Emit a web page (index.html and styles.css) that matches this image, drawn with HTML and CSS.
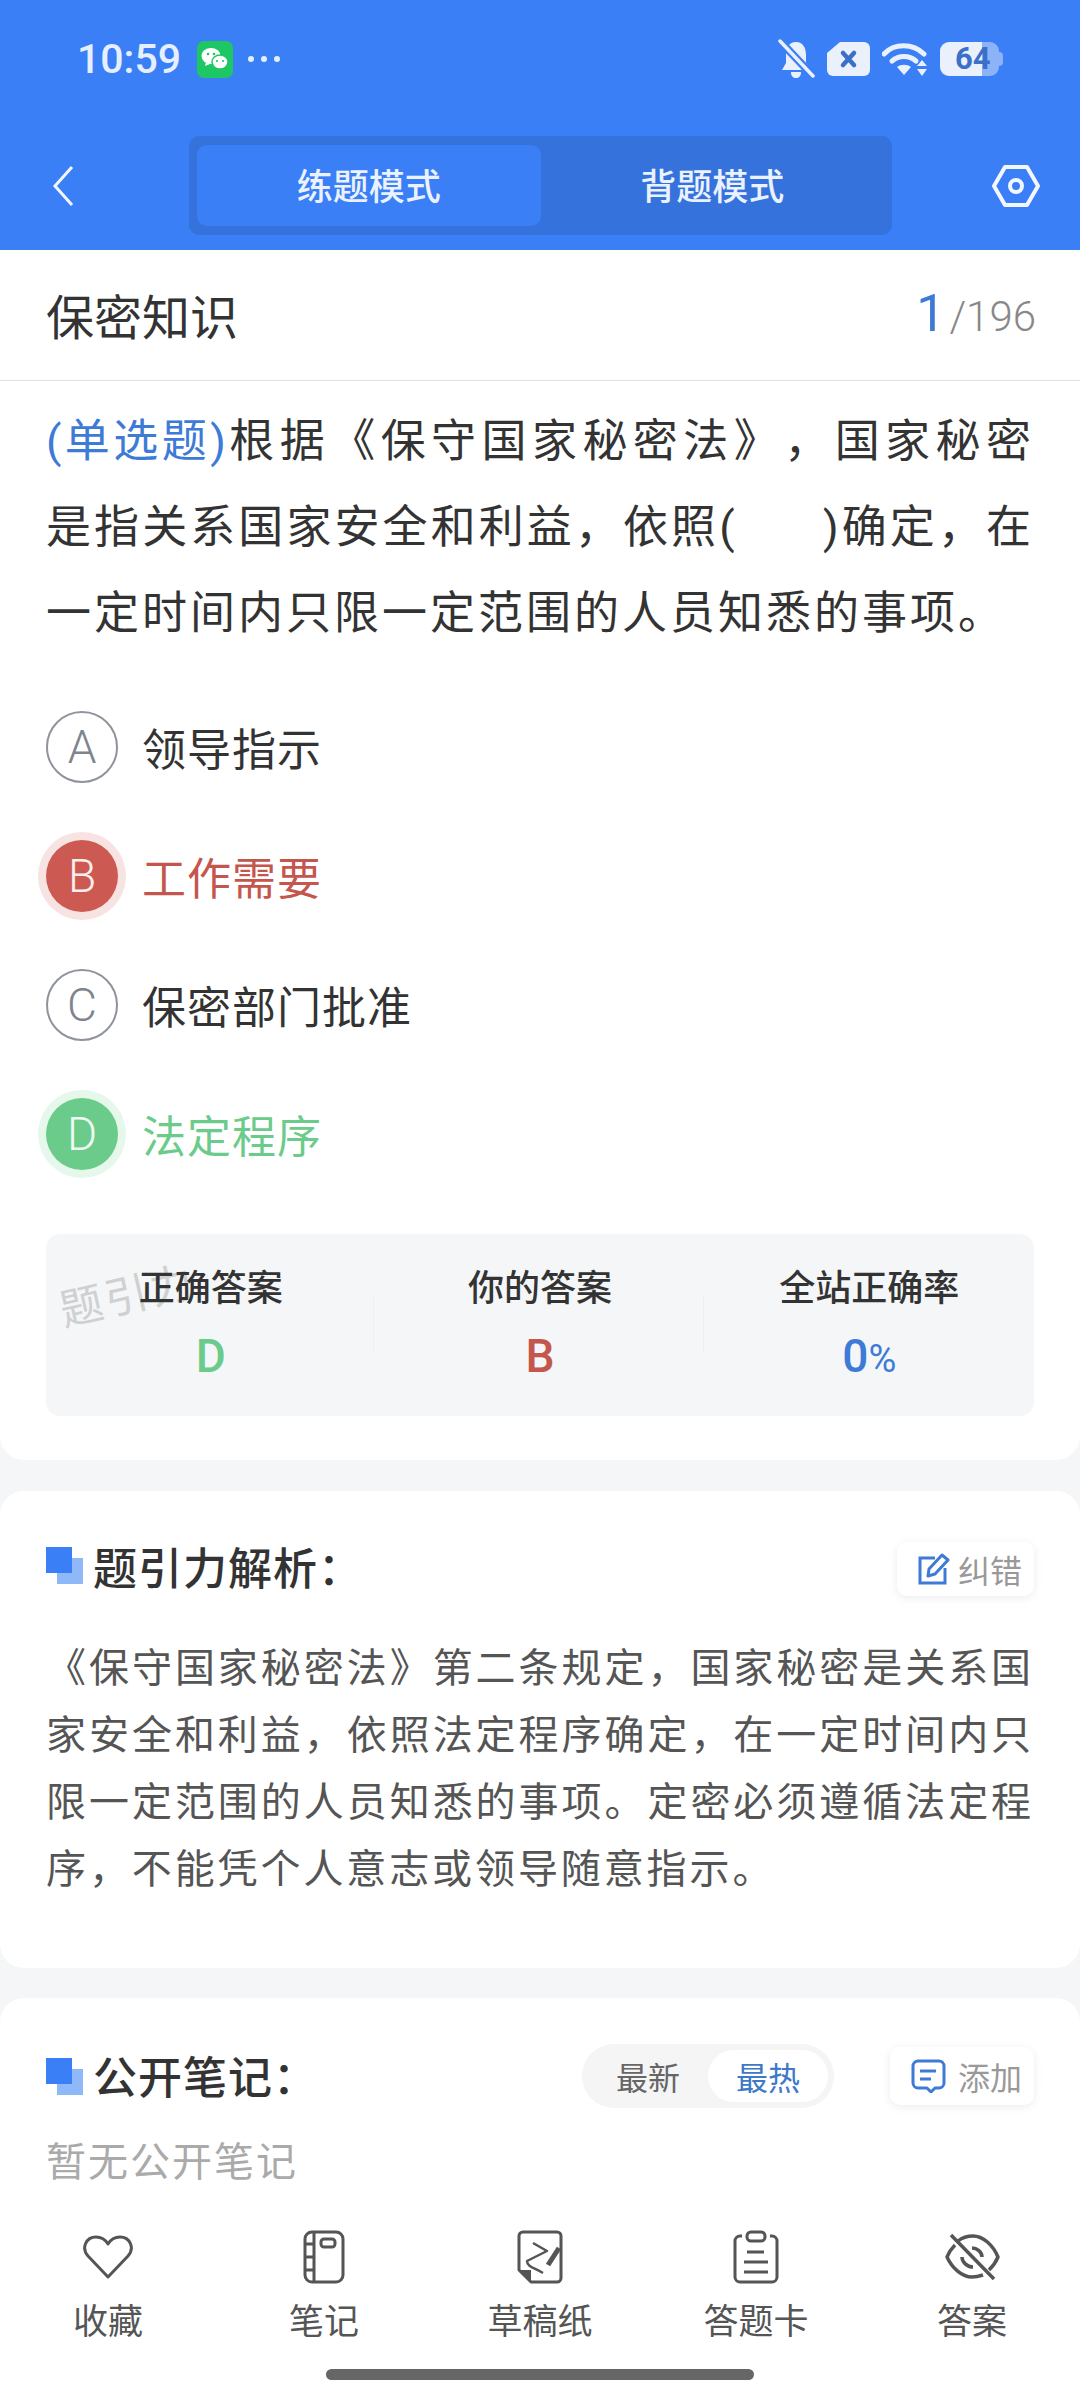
FILE: index.html
```html
<!DOCTYPE html>
<html lang="zh-CN">
<head>
    <meta charset="UTF-8">
    <meta name="viewport" content="width=device-width, initial-scale=1.0">
    <title>保密知识</title>
    <link rel="stylesheet" href="styles.css">
</head>
<body>

<div class="page">
    <!-- Blue header: status bar and mode switch -->
    <header class="header">
        <div class="status-bar">
            <span class="time">10:59</span>
            <svg class="wechat" width="36" height="37" viewBox="0 0 36 37">
                <rect width="36" height="37" rx="7" fill="#1fc764"/>
                <ellipse cx="14" cy="15" rx="9.5" ry="8" fill="#fff"/>
                <path d="M9 21l-1 4 5-2z" fill="#fff"/>
                <ellipse cx="23" cy="21" rx="8" ry="7" fill="#fff" stroke="#1fc764" stroke-width="1.5"/>
                <circle cx="11" cy="13" r="1.3" fill="#1fc764"/>
                <circle cx="17" cy="13" r="1.3" fill="#1fc764"/>
                <circle cx="20" cy="20" r="1.1" fill="#1fc764"/>
                <circle cx="26" cy="20" r="1.1" fill="#1fc764"/>
            </svg>
            <div class="status-dots"><i></i><i></i><i></i></div>
            <div class="status-right">
                <svg width="37" height="40" viewBox="0 0 37 40">
                    <path d="M18 3c7 0 10 6 10 13v8l5 7H4l4-7v-8C8 9 11 3 18 3z" fill="#eaf1fd"/>
                    <path d="M13 33h10c0 4-2 6-5 6s-5-2-5-6z" fill="#eaf1fd"/>
                    <path d="M1 1l35 37" stroke="#3b7ff6" stroke-width="8"/>
                    <path d="M2 2l33 35" stroke="#eaf1fd" stroke-width="3.5" stroke-linecap="round"/>
                </svg>
                <svg width="43" height="34" viewBox="0 0 43 34">
                    <path d="M13 0h24a6 6 0 0 1 6 6v22a6 6 0 0 1-6 6H6a6 6 0 0 1-6-6V11z" fill="#eaf1fd"/>
                    <path d="M16 11l11 12M27 11L16 23" stroke="#3b6fc8" stroke-width="4.5" stroke-linecap="round"/>
                </svg>
                <svg width="46" height="34" viewBox="0 0 46 34">
                    <path d="M2 12C12 1 31 1 42 12" fill="none" stroke="#eaf1fd" stroke-width="5" stroke-linecap="round"/>
                    <path d="M10 19c7-6 17-6 24 0" fill="none" stroke="#eaf1fd" stroke-width="5" stroke-linecap="round"/>
                    <path d="M15 25c4-3 10-3 14 0l-7 8z" fill="#eaf1fd"/>
                    <path d="M40 18l5 6H35zM40 34l5-7H35z" fill="#eaf1fd"/>
                </svg>
                <div class="battery">64</div>
            </div>
        </div>
        <div class="nav-bar">
            <svg class="back" width="22" height="42" viewBox="0 0 22 42">
                <path d="M20 2L3 21l17 19" fill="none" stroke="#f2f6ff" stroke-width="3"/>
            </svg>
            <div class="mode-switch">
                <div class="mode mode-active">练题模式</div>
                <div class="mode">背题模式</div>
            </div>
            <svg class="hex" width="48" height="44" viewBox="0 0 48 44">
                <path d="M13 3h22l11 19-11 19H13L2 22z" fill="none" stroke="#f2f6ff" stroke-width="4" stroke-linejoin="round"/>
                <circle cx="24" cy="22" r="6" fill="none" stroke="#f2f6ff" stroke-width="4"/>
            </svg>
        </div>
    </header>

    <!-- Question card -->
    <section class="card card-question">
        <div class="title-row">
            <span class="title">保密知识</span>
            <span class="counter"><b>1</b>/196</span>
        </div>
        <p class="question">
            <span class="question-line"><span class="question-type">(单选题)</span>根据《保守国家秘密法》，国家秘密</span>
            <span class="question-line">是指关系国家安全和利益，依照(&nbsp;&nbsp;&nbsp;&nbsp;&nbsp;&nbsp;)确定，在</span>
            <span class="question-line question-line-last">一定时间内只限一定范围的人员知悉的事项。</span>
        </p>

        <div class="options">
            <div class="option"><span class="badge">A</span>领导指示</div>
            <div class="option option-wrong"><span class="badge">B</span>工作需要</div>
            <div class="option"><span class="badge">C</span>保密部门批准</div>
            <div class="option option-right"><span class="badge">D</span>法定程序</div>
        </div>

        <div class="stats">
            <span class="watermark">题引力</span>
            <div class="stat">
                <div class="stat-label">正确答案</div>
                <div class="stat-value green">D</div>
            </div>
            <div class="stat">
                <div class="stat-label">你的答案</div>
                <div class="stat-value red">B</div>
            </div>
            <div class="stat">
                <div class="stat-label">全站正确率</div>
                <div class="stat-value blue">0<small>%</small></div>
            </div>
        </div>
    </section>

    <!-- Explanation card -->
    <section class="card card-analysis">
        <div class="section-head">
            <span class="marker"></span>
            <h2>题引力解析：</h2>
            <button class="chip">
                <svg width="32" height="32" viewBox="0 0 32 32">
                    <path d="M17 5H2v25h25V15" fill="none" stroke="#3d7bd6" stroke-width="3"/>
                    <path d="M11 16L24 2l6 5-13 14-7 2z" fill="none" stroke="#3d7bd6" stroke-width="3" stroke-linejoin="round"/>
                </svg>
                纠错
            </button>
        </div>
        <p class="analysis">《保守国家秘密法》第二条规定，国家秘密是关系国家安全和利益，依照法定程序确定，在一定时间内只限一定范围的人员知悉的事项。定密必须遵循法定程序，不能凭个人意志或领导随意指示。</p>
    </section>

    <!-- Public notes card -->
    <section class="card card-notes">
        <div class="section-head">
            <span class="marker"></span>
            <h2>公开笔记：</h2>
            <div class="sort">
                <span class="sort-item">最新</span>
                <span class="sort-item sort-active">最热</span>
            </div>
            <button class="chip chip-add">
                <svg width="35" height="34" viewBox="0 0 35 34">
                    <path d="M7 2h21a5 5 0 0 1 5 5v17a5 5 0 0 1-5 5h-4l-4 4-4-4H7a5 5 0 0 1-5-5V7a5 5 0 0 1 5-5z" fill="none" stroke="#3d7bd6" stroke-width="3" stroke-linejoin="round"/>
                    <path d="M9 12h16M9 20h11" stroke="#3d7bd6" stroke-width="3"/>
                </svg>
                添加
            </button>
        </div>
        <p class="empty">暂无公开笔记</p>
    </section>

    <!-- Bottom toolbar -->
    <nav class="toolbar">
        <div class="tools">
            <div class="tool">
                <svg width="52" height="46" viewBox="0 0 52 46">
                    <path d="M26 43L6 22C-1 14 4 3 14 3c5 0 9 2 12 7 3-5 7-7 12-7 10 0 15 11 8 19z" fill="none" stroke="#555" stroke-width="3" stroke-linejoin="round"/>
                </svg>
                <span>收藏</span>
            </div>
            <div class="tool">
                <svg width="42" height="54" viewBox="0 0 42 54">
                    <rect x="2" y="2" width="38" height="50" rx="7" fill="none" stroke="#555" stroke-width="3"/>
                    <path d="M11 2v50M2 14h9M2 27h9M2 40h9" fill="none" stroke="#555" stroke-width="3"/>
                    <rect x="18" y="9" width="14" height="8" rx="3" fill="none" stroke="#555" stroke-width="3"/>
                </svg>
                <span>笔记</span>
            </div>
            <div class="tool">
                <svg width="46" height="54" viewBox="0 0 46 54">
                    <path d="M14 52h26a4 4 0 0 0 4-4V6a4 4 0 0 0-4-4H6a4 4 0 0 0-4 4v34z" fill="none" stroke="#555" stroke-width="3" stroke-linejoin="round"/>
                    <path d="M2 40h12v12z" fill="#555"/>
                    <path d="M16 13l14 8-20 10c0 6 8 7 16 12" fill="none" stroke="#555" stroke-width="2.5" stroke-linejoin="round"/>
                    <path d="M42 18L31 35" stroke="#555" stroke-width="5"/>
                </svg>
                <span>草稿纸</span>
            </div>
            <div class="tool">
                <svg width="46" height="54" viewBox="0 0 46 54">
                    <path d="M9 6H7a5 5 0 0 0-5 5v36a5 5 0 0 0 5 5h32a5 5 0 0 0 5-5V11a5 5 0 0 0-5-5h-2" fill="none" stroke="#555" stroke-width="3"/>
                    <rect x="14" y="2" width="18" height="9" rx="4" fill="none" stroke="#555" stroke-width="3"/>
                    <path d="M14 22h17M11 32h24M11 42h24" stroke="#555" stroke-width="3"/>
                </svg>
                <span>答题卡</span>
            </div>
            <div class="tool">
                <svg width="56" height="48" viewBox="0 0 56 48">
                    <path d="M14 8c5-4 10-5 15-5 10 0 20 9 25 21-2 5-5 9-9 13M39 42c-3 1-7 2-11 2C18 44 8 35 3 24c2-5 5-9 8-12" fill="none" stroke="#555" stroke-width="3.5" stroke-linejoin="round"/>
                    <path d="M28 15c5 0 10 4 10 9M18 24c0 5 5 10 11 10" fill="none" stroke="#555" stroke-width="3.5"/>
                    <path d="M7 2l43 44" stroke="#555" stroke-width="3.5"/>
                </svg>
                <span>答案</span>
            </div>
        </div>
        <div class="home-bar"></div>
    </nav>
</div>

</body>
</html>
```

FILE: styles.css
```css
* {
    box-sizing: border-box;
}
body {
    margin: 0;
    background-color: #f4f6f8;
    font-family: Roboto, "Noto Sans CJK SC", sans-serif;
    color: #333;
    text-spacing-trim: space-all;
}
p, h2 {
    margin: 0;
}
.page {
    width: 1080px;
    height: 2400px;
    display: flex;
    flex-direction: column;
    overflow: hidden;
}

/* Header */
.header {
    height: 250px;
    background-color: #3b7ff6;
    flex-shrink: 0;
}
.status-bar {
    height: 118px;
    padding: 0 81px 0 77px;
    display: flex;
    align-items: center;
}
.time {
    font-size: 41px;
    font-weight: 500;
    color: #e6efff;
}
.wechat {
    margin-left: 16px;
}
.status-dots {
    display: flex;
    gap: 7px;
    margin-left: 15px;
}
.status-dots i {
    width: 6px;
    height: 6px;
    border-radius: 50%;
    background-color: #e6efff;
}
.status-right {
    margin-left: auto;
    display: flex;
    align-items: center;
    gap: 12px;
}
.battery {
    position: relative;
    width: 59px;
    height: 34px;
    padding-left: 15px;
    border-radius: 9px;
    background: linear-gradient(to right, #eaf1fd 42px, #8cb3f8 42px);
    color: #3b6fc8;
    font-size: 31px;
    font-weight: 700;
    line-height: 34px;
}
.battery::after {
    content: "";
    position: absolute;
    right: -4px;
    top: 10px;
    width: 4px;
    height: 14px;
    border-radius: 0 4px 4px 0;
    background-color: #8cb3f8;
}
.nav-bar {
    margin-top: 18px;
    padding: 0 40px 0 52px;
    display: flex;
    align-items: center;
}
.mode-switch {
    width: 703px;
    height: 99px;
    margin-left: 115px;
    padding: 9px 8px;
    display: flex;
    background-color: #3672db;
    border-radius: 10px;
}
.mode {
    flex: 1;
    padding-bottom: 3px;
    display: flex;
    align-items: center;
    justify-content: center;
    border-radius: 10px;
    color: #eaf2ff;
    font-size: 36px;
    font-weight: 500;
}
.mode-active {
    background-color: #3b7ff6;
}
.hex {
    margin-left: auto;
}

/* Cards */
.card {
    background-color: #fff;
    flex-shrink: 0;
}
.card-question {
    height: 1210px;
    border-radius: 0 0 24px 24px;
}
.card-analysis {
    height: 477px;
    margin-top: 31px;
    padding: 48px 46px 0;
    border-radius: 24px;
}
.card-notes {
    flex: 1;
    margin-top: 30px;
    padding: 46px 46px 0;
    border-radius: 24px 24px 0 0;
}

.title-row {
    height: 131px;
    padding: 0 44px 3px 46px;
    display: flex;
    align-items: center;
    justify-content: space-between;
    border-bottom: 1px solid #e0e0e0;
}
.title {
    font-size: 48px;
}
.counter {
    font-size: 42px;
    font-weight: 300;
    color: #888;
}
.counter b {
    margin-right: 4px;
    font-size: 52px;
    font-weight: 400;
    color: #3d7bd6;
}
.question {
    margin-top: 18px;
    padding: 0 46px;
    font-size: 45px;
    letter-spacing: 3px;
    line-height: 86px;
    color: #333;
}
.question-line {
    display: block;
    text-align: justify;
    text-align-last: justify;
}
.question-line-last {
    text-align-last: left;
}
.question-type {
    letter-spacing: 1px;
    color: #3d7bd6;
}

/* Options */
.options {
    margin-top: 25px;
    padding: 0 46px;
}
.option {
    height: 129px;
    display: flex;
    align-items: center;
    gap: 24px;
    font-size: 44px;
    letter-spacing: 1px;
    color: #333;
}
.badge {
    width: 72px;
    height: 72px;
    display: flex;
    align-items: center;
    justify-content: center;
    border: 2px solid #8f949c;
    border-radius: 50%;
    font-size: 46px;
    font-weight: 300;
    letter-spacing: 0;
    color: #7f858e;
}
.option-wrong {
    color: #c4564e;
}
.option-wrong .badge {
    border: none;
    background-color: #cc5a52;
    box-shadow: 0 0 0 8px #f7e3e1;
    color: #fbeeed;
}
.option-right {
    color: #6acb8a;
}
.option-right .badge {
    border: none;
    background-color: #6acb8a;
    box-shadow: 0 0 0 8px #e6f7ec;
    color: #eefaf2;
}

/* Answer summary */
.stats {
    position: relative;
    height: 182px;
    margin: 36px 46px 0;
    display: grid;
    grid-template-columns: repeat(3, 1fr);
    background-color: #f4f6f8;
    border-radius: 14px;
}
.watermark {
    position: absolute;
    left: 12px;
    top: 27px;
    font-size: 43px;
    color: #cfd0d2;
    letter-spacing: 3px;
    transform: rotate(-13deg);
}
.stat {
    position: relative;
    text-align: center;
}
.stat + .stat::before {
    content: "";
    position: absolute;
    left: -2px;
    top: 61px;
    width: 1px;
    height: 57px;
    background-color: #eef0f2;
}
.stat-label {
    position: relative;
    margin-top: 29px;
    height: 52px;
    font-size: 36px;
    font-weight: 500;
    line-height: 52px;
}
.stat-value {
    margin-top: 12px;
    height: 58px;
    font-size: 46px;
    font-weight: 500;
    line-height: 58px;
}
.stat-value small {
    font-size: 38px;
    font-weight: 400;
}
.green {
    color: #6acb8a;
}
.red {
    color: #c4564e;
}
.blue {
    color: #3d7bd6;
}

/* Section headings */
.section-head {
    height: 60px;
    display: flex;
    align-items: center;
}
.marker {
    position: relative;
    width: 37px;
    height: 37px;
    margin-right: 10px;
    margin-bottom: 7px;
    flex-shrink: 0;
}
.marker::before,
.marker::after {
    content: "";
    position: absolute;
    width: 26px;
    height: 26px;
}
.marker::before {
    right: 0;
    bottom: 0;
    background-color: #8fb8f8;
}
.marker::after {
    left: 0;
    top: 0;
    background-color: #3b7ff6;
}
h2 {
    margin-bottom: 7px;
    font-size: 44px;
    font-weight: 500;
    letter-spacing: 1px;
    color: #333;
}
.chip {
    margin-left: auto;
    height: 54px;
    padding: 0 12px 0 21px;
    display: flex;
    align-items: center;
    gap: 8px;
    border: none;
    border-radius: 10px;
    background-color: #fff;
    box-shadow: 0 2px 10px rgba(0, 0, 0, 0.08);
    font-family: inherit;
    font-size: 32px;
    color: #999;
}
.chip-add {
    width: 144px;
    margin-left: 56px;
    height: 58px;
    padding-left: 21px;
    gap: 12px;
}
.analysis {
    margin-top: 36px;
    font-size: 40px;
    letter-spacing: 2.9px;
    line-height: 67px;
    text-align: justify;
    color: #555;
}
.card-notes .section-head {
    height: 64px;
}
.card-notes .marker {
    margin-bottom: 0;
}
.card-notes h2 {
    margin-bottom: 2px;
}
.sort {
    margin-left: auto;
    width: 252px;
    height: 64px;
    padding: 6px;
    display: flex;
    align-items: center;
    background-color: #f5f5f5;
    border-radius: 32px;
    font-size: 32px;
    color: #666;
}
.sort-item {
    flex: 1;
    height: 52px;
    display: flex;
    align-items: center;
    justify-content: center;
    border-radius: 26px;
}
.sort-active {
    flex: 0 0 120px;
    background-color: #fff;
    color: #3d78c9;
}
.empty {
    margin-top: 25px;
    font-size: 40px;
    letter-spacing: 2px;
    line-height: 60px;
    color: #aaa;
}

/* Bottom toolbar */
.toolbar {
    height: 208px;
    flex-shrink: 0;
    background-color: #fff;
    padding-top: 36px;
}
.tools {
    display: grid;
    grid-template-columns: repeat(5, 216px);
}
.tool {
    display: flex;
    flex-direction: column;
    align-items: center;
    font-size: 35px;
    color: #555;
}
.tool svg {
    height: 56px;
}
.tool span {
    margin-top: 15px;
    line-height: 46px;
}
.home-bar {
    width: 428px;
    height: 11px;
    margin: 23px auto 0;
    background-color: #666;
    border-radius: 6px;
}
```
